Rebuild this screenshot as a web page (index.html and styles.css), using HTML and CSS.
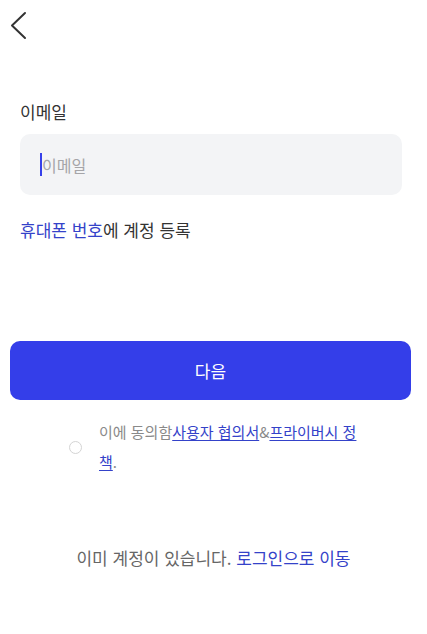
FILE: index.html
```html
<!DOCTYPE html>
<html lang="ko">
<head>
  <meta charset="UTF-8" />
  <meta name="viewport" content="width=device-width, initial-scale=1.0"/>
  <title>이메일 등록</title>
  <link rel="stylesheet" href="styles.css">
</head>
<body>

  <div class="header">
    <button class="back" aria-label="뒤로">
      <svg width="30" height="50" viewBox="0 0 30 50">
        <polyline points="25,13 12,25.5 25,38" fill="none" stroke="#333" stroke-width="2" stroke-linecap="round" stroke-linejoin="round"/>
      </svg>
    </button>
  </div>

  <div class="form">
    <label class="label" for="email">이메일</label>
    <div class="field">
      <span class="caret"></span>
      <input type="text" id="email" placeholder="이메일" />
    </div>
    <div class="phone"><a href="#">휴대폰 번호</a>에 계정 등록</div>
  </div>

  <button class="next">다음</button>

  <div class="agree">
    <span class="radio"></span>
    <p class="agree-text">이에 동의함<a href="#">사용자 협의서</a>&amp;<a href="#">프라이버시 정책</a>.</p>
  </div>

  <div class="login">이미 계정이 있습니다. <a href="#">로그인으로 이동</a></div>

</body>
</html>
```

FILE: styles.css
```css
body {
  margin: 0;
  font-family: "Noto Sans CJK KR", "Noto Sans", sans-serif;
  background: #fff;
  color: #333;
}
a {
  color: #3442c9;
  text-decoration: none;
}
.header {
  height: 50px;
}
.back {
  border: none;
  background: none;
  padding: 0;
  display: block;
  width: 30px;
  height: 50px;
}
.form {
  padding: 0 25px 0 20px;
}
.label {
  display: block;
  margin-top: 51px;
  font-size: 17px;
  line-height: 22px;
  color: #333;
}
.field {
  margin-top: 11px;
  height: 61px;
  background: #f3f4f6;
  border-radius: 10px;
  display: flex;
  align-items: center;
  padding-left: 20px;
  box-sizing: border-box;
}
.caret {
  width: 2px;
  height: 23px;
  background: #3640ea;
}
.field input {
  flex: 1;
  border: none;
  outline: none;
  background: transparent;
  font-family: inherit;
  font-size: 16px;
  padding: 0;
  color: #333;
}
.field input::placeholder {
  color: #a5a5a8;
}
.phone {
  margin-top: 24px;
  font-size: 17px;
  line-height: 22px;
  color: #333;
}
.next {
  display: block;
  margin: 100px 16px 0 10px;
  width: calc(100% - 26px);
  height: 59px;
  border: none;
  border-radius: 10px;
  background: #343ee9;
  color: #fff;
  font-family: inherit;
  font-size: 17px;
}
.agree {
  margin-top: 17px;
  display: flex;
  align-items: center;
  padding-left: 69px;
}
.radio {
  width: 11px;
  height: 11px;
  border: 1.5px solid #d4d4d4;
  border-radius: 50%;
  flex-shrink: 0;
}
.agree-text {
  margin: 0 0 0 17px;
  width: 258px;
  font-size: 15px;
  line-height: 30px;
  color: #8a8a8a;
  word-break: break-all;
}
.agree-text a {
  text-decoration: underline;
  text-underline-offset: 2px;
}
.login {
  margin-top: 70px;
  text-align: center;
  font-size: 17px;
  line-height: 22px;
  color: #666;
}
```
